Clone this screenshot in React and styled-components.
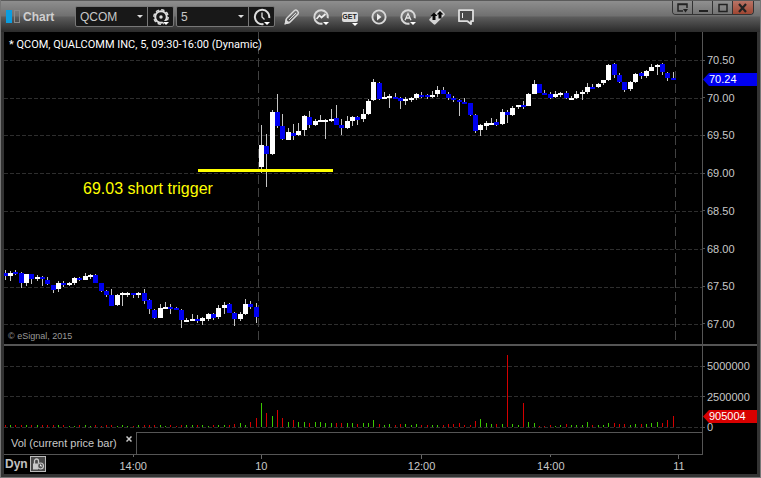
import { useState } from "react";
import styled, { createGlobalStyle } from "styled-components";

// x, open/close direction (1 = up), body top, body bottom, wick top, wick bottom, volume
const candles = [
  [5, 0, 273, 276, 270, 280, 2],
  [10, 1, 273, 276, 271, 281, 2],
  [15, 0, 272, 274, 270, 275, 2],
  [21, 0, 273, 283, 272, 288, 2],
  [26, 1, 274, 283, 274, 286, 2],
  [31, 0, 274, 279, 274, 284, 2],
  [37, 1, 277, 279, 275, 281, 2],
  [42, 0, 277, 279, 276, 286, 2],
  [47, 0, 280, 284, 277, 285, 2],
  [53, 0, 285, 290, 285, 293, 2],
  [58, 1, 283, 289, 281, 292, 2],
  [63, 0, 283, 285, 281, 287, 2],
  [69, 1, 283, 285, 282, 286, 1],
  [74, 1, 278, 283, 277, 285, 1],
  [79, 0, 278, 280, 277, 281, 2],
  [85, 1, 276, 280, 273, 280, 2],
  [90, 1, 275, 277, 274, 279, 1],
  [95, 0, 275, 283, 274, 283, 2],
  [101, 0, 283, 291, 283, 292, 1],
  [106, 0, 291, 295, 290, 297, 2],
  [111, 0, 295, 306, 289, 306, 2],
  [117, 1, 295, 305, 294, 306, 1],
  [122, 1, 293, 295, 292, 306, 2],
  [127, 1, 293, 295, 292, 297, 1],
  [133, 0, 293, 295, 293, 298, 1],
  [138, 1, 293, 295, 292, 298, 2],
  [144, 0, 293, 301, 289, 304, 2],
  [149, 0, 300, 309, 299, 314, 2],
  [154, 0, 310, 318, 309, 319, 2],
  [160, 1, 308, 318, 304, 318, 2],
  [165, 1, 307, 309, 302, 309, 1],
  [170, 0, 307, 309, 304, 314, 2],
  [176, 0, 308, 310, 307, 310, 1],
  [181, 0, 310, 320, 309, 328, 2],
  [186, 1, 320, 322, 318, 322, 2],
  [192, 1, 319, 321, 314, 321, 2],
  [197, 0, 319, 321, 315, 323, 2],
  [202, 1, 318, 321, 317, 325, 2],
  [208, 1, 314, 319, 313, 321, 1],
  [213, 0, 314, 318, 313, 320, 2],
  [218, 1, 308, 317, 305, 319, 2],
  [224, 1, 305, 308, 302, 314, 2],
  [229, 0, 304, 313, 303, 313, 2],
  [234, 0, 313, 319, 312, 326, 3],
  [240, 1, 314, 319, 312, 321, 4],
  [245, 1, 304, 314, 299, 315, 2],
  [250, 0, 304, 307, 301, 309, 5],
  [256, 0, 307, 317, 303, 323, 9],
  [261, 1, 145, 167, 125, 173, 24],
  [266, 0, 146, 154, 134, 187, 14],
  [272, 1, 112, 154, 110, 155, 11],
  [277, 0, 112, 126, 94, 128, 17],
  [282, 0, 126, 139, 114, 140, 9],
  [288, 1, 132, 140, 128, 140, 5],
  [293, 0, 133, 136, 124, 140, 7],
  [298, 1, 131, 135, 123, 136, 5],
  [304, 1, 116, 130, 115, 136, 5],
  [309, 0, 117, 125, 111, 128, 4],
  [315, 1, 121, 125, 119, 126, 5],
  [320, 1, 120, 122, 115, 122, 5],
  [325, 1, 120, 122, 119, 139, 4],
  [331, 1, 119, 121, 109, 122, 4],
  [336, 0, 118, 125, 105, 125, 4],
  [341, 0, 125, 128, 119, 135, 4],
  [347, 1, 121, 128, 116, 129, 4],
  [352, 1, 117, 121, 116, 126, 4],
  [357, 0, 117, 120, 116, 125, 3],
  [363, 1, 114, 119, 109, 122, 4],
  [368, 1, 101, 114, 99, 115, 4],
  [373, 1, 82, 100, 79, 101, 7],
  [379, 0, 83, 99, 82, 100, 3],
  [384, 1, 97, 99, 92, 99, 2],
  [389, 1, 96, 98, 94, 108, 3],
  [395, 0, 97, 99, 93, 99, 2],
  [400, 0, 98, 101, 97, 109, 3],
  [405, 1, 99, 101, 97, 105, 3],
  [411, 1, 98, 100, 97, 102, 2],
  [416, 1, 94, 98, 93, 100, 3],
  [421, 0, 95, 97, 92, 98, 2],
  [427, 0, 95, 97, 94, 99, 2],
  [432, 1, 95, 97, 91, 98, 2],
  [437, 1, 90, 94, 86, 97, 2],
  [443, 0, 90, 94, 87, 94, 2],
  [448, 0, 94, 98, 92, 100, 3],
  [453, 0, 98, 100, 96, 102, 3],
  [459, 0, 100, 102, 99, 116, 4],
  [464, 0, 102, 104, 98, 104, 2],
  [470, 0, 103, 115, 103, 116, 2],
  [475, 0, 115, 131, 114, 133, 6],
  [480, 1, 125, 130, 124, 136, 8],
  [486, 1, 123, 126, 121, 130, 4],
  [491, 1, 123, 125, 118, 125, 3],
  [496, 0, 122, 125, 119, 126, 3],
  [502, 1, 112, 124, 109, 125, 3],
  [507, 0, 112, 115, 110, 123, 72],
  [512, 1, 108, 115, 106, 116, 3],
  [518, 1, 105, 107, 105, 109, 2],
  [523, 0, 105, 107, 101, 109, 24],
  [528, 1, 94, 106, 93, 106, 5],
  [534, 1, 84, 94, 80, 94, 4],
  [539, 0, 84, 93, 84, 93, 1],
  [544, 0, 93, 95, 90, 95, 1],
  [550, 0, 94, 98, 92, 99, 2],
  [555, 1, 94, 97, 91, 98, 1],
  [560, 1, 93, 95, 92, 97, 2],
  [566, 0, 93, 98, 91, 99, 3],
  [571, 1, 98, 100, 96, 100, 2],
  [576, 1, 94, 98, 91, 99, 2],
  [582, 1, 92, 94, 90, 100, 2],
  [587, 1, 87, 92, 83, 94, 5],
  [592, 0, 87, 89, 84, 89, 2],
  [598, 1, 84, 87, 83, 88, 2],
  [603, 1, 80, 83, 80, 85, 2],
  [608, 1, 65, 80, 64, 81, 4],
  [614, 0, 64, 75, 63, 78, 4],
  [619, 0, 75, 82, 73, 83, 3],
  [624, 0, 82, 90, 82, 92, 3],
  [630, 1, 82, 89, 81, 91, 2],
  [635, 1, 74, 82, 73, 83, 3],
  [641, 0, 73, 76, 72, 79, 3],
  [646, 1, 71, 76, 70, 78, 3],
  [651, 1, 67, 71, 64, 71, 4],
  [657, 1, 65, 67, 64, 75, 5],
  [662, 0, 64, 72, 63, 75, 4],
  [667, 0, 73, 78, 72, 81, 7],
  [673, 0, 78, 80, 72, 80, 11],
];

const prices = ["70.50", "70.00", "69.50", "69.00", "68.50", "68.00", "67.50", "67.00"];
const priceLines = [60, 98, 135, 173, 211, 249, 287, 324];
const volumes = ["5000000", "2500000", "0"];
const volumeLines = [366, 396, 427];
const sessions = [258, 675];

const times = [
  { x: 133, label: "14:00", tick: 2 },
  { x: 261, label: "10", tick: 4 },
  { x: 421, label: "12:00", tick: 4 },
  { x: 550, label: "14:00", tick: 2 },
  { x: 678, label: "11", tick: 4 },
];

const PriceChart = () => (
  <PlotSvg
    $height={312}
    viewBox="4 32 698 312"
    preserveAspectRatio="none"
    role="img"
    aria-label="QCOM price"
  >
    <defs>
      <pattern id="dashH" width="6" height="400" patternUnits="userSpaceOnUse" x="4">
        <rect width="4" height="500" fill="#2e2e2e" />
      </pattern>
      <pattern id="dashV" width="800" height="13" patternUnits="userSpaceOnUse" y="32">
        <rect width="800" height="9" fill="#424242" />
      </pattern>
    </defs>
    {priceLines.map((y) => (
      <rect key={y} x="4" y={y} width="698" height="1" fill="url(#dashH)" />
    ))}
    {sessions.map((x) => (
      <rect key={x} x={x} y="32" width="1" height="308" fill="url(#dashV)" />
    ))}
    {candles.map(([x, up, top, bottom, high, low]) => (
      <g key={x}>
        <rect x={x} y={high} width="1" height={low - high} fill="#c4c4c4" />
        <rect
          x={x - 2}
          y={top}
          width="5"
          height={bottom - top}
          fill={up ? "#ffffff" : "#0000f0"}
        />
      </g>
    ))}
    <rect x="198" y="169" width="135" height="3" fill="#ffff00" />
  </PlotSvg>
);

const VolumeChart = () => (
  <PlotSvg
    $height={86}
    viewBox="4 346 698 86"
    preserveAspectRatio="none"
    role="img"
    aria-label="Volume"
  >
    {volumeLines.map((y) => (
      <line
        key={y}
        x1="4"
        x2="702"
        y1={y + 0.5}
        y2={y + 0.5}
        stroke="#2e2e2e"
        strokeDasharray="4 2"
      />
    ))}
    {candles.map(([x, up, , , , , volume]) => (
      <rect
        key={x}
        x={x}
        y={427 - volume}
        width="1"
        height={volume}
        fill={up ? "#3cc800" : "#d40000"}
      />
    ))}
  </PlotSvg>
);

const Caret = () => <path d="M12 15h6l-3 3z" fill="#fff" />;

const OpenRing = () => (
  <path
    d="M11.5 16.6A6.8 6.8 0 1 1 16.8 11.2"
    fill="none"
    stroke="#d8d8d8"
    strokeWidth="2"
  />
);

const tools = [
  {
    name: "Draw",
    icon: (
      <g fill="none" stroke="#dadada" strokeWidth="1.5">
        <path d="M3.5 16.5l1-5 8-8q1.500-1 3 .5t.5 3l-8 8z" />
        <path d="M7 13l7-7" strokeWidth="1" />
        <path d="M3.5 16.5l.6-3 2.400 2.400z" fill="#dadada" />
      </g>
    ),
  },
  {
    name: "Studies",
    icon: (
      <>
        <OpenRing />
        <path d="M5.5 12l3-3.5 2 2L14.5 7" fill="none" stroke="#eee" strokeWidth="1.7" />
        <Caret />
      </>
    ),
  },
  { name: "Get", icon: null },
  {
    name: "Play",
    icon: (
      <>
        <circle cx="10" cy="10" r="6.600" fill="none" stroke="#d8d8d8" strokeWidth="1.900" />
        <path d="M8 6.500L12.500 10 8 13.500z" fill="#eee" />
      </>
    ),
  },
  {
    name: "Alerts",
    icon: (
      <>
        <OpenRing />
        <path d="M7 13.200L10 6.500l3 6.700M8 11h4" fill="none" stroke="#e4e4e4" strokeWidth="1.300" />
        <Caret />
      </>
    ),
  },
  {
    name: "Trade",
    icon: (
      <>
        <path
          d="M2.500 12L12 2.500q1-.5 1.800.3l3.700 3.700q.8.800 0 1.800L8.500 17.300q-1 .8-1.800 0l-4.200-3.800q-.6-.8 0-1.500z"
          fill="#d4d4d4"
        />
        <path d="M7 5.500l3.500 3.500H8.500v4h-3V9h-2z" fill="#080808" />
        <path d="M13 4l3.500 3.500h-2v4h-3v-4h-2z" fill="#080808" />
      </>
    ),
  },
  {
    name: "Notes",
    icon: (
      <>
        <path
          d="M3 3.200h14v11h-2v2.800l-3.500-2.800H3z"
          fill="#4a4a4a"
          stroke="#dedede"
          strokeWidth="1.800"
          strokeLinejoin="round"
        />
        <path d="M6.500 6v5" stroke="#eee" strokeWidth="1" />
      </>
    ),
  },
];

const App = () => {
  const [symbol, setSymbol] = useState("QCOM");
  const [interval, setInterval] = useState("5");

  return (
    <>
      <GlobalStyle />
      <Window>
        <Header>
          <Logo viewBox="0 0 16 14" aria-hidden="true">
            <rect x="1" y="0" width="6" height="13" fill="#0a9de0" />
            <rect x="9.500" y="0.500" width="5" height="12" fill="none" stroke="#8a8a8a" />
          </Logo>
          <WindowTitle>Chart</WindowTitle>
          <Group>
            <SelectBox>
              <Select
                aria-label="Symbol"
                value={symbol}
                onChange={(e) => setSymbol(e.target.value)}
              >
                <option>QCOM</option>
              </Select>
            </SelectBox>
            <GroupButton aria-label="Symbol settings">
              <Icon viewBox="0 0 20 20">
                <circle cx="10" cy="10" r="5.800" fill="none" stroke="#dedede" strokeWidth="2" />
                <circle
                  cx="10"
                  cy="10"
                  r="7.200"
                  fill="none"
                  stroke="#dedede"
                  strokeWidth="1.400"
                  strokeDasharray="3.400 2.250"
                />
                <circle cx="10" cy="10" r="1.700" fill="#dedede" />
                <path d="M11 14h8l-4 5z" fill="#161616" />
                <Caret />
              </Icon>
            </GroupButton>
          </Group>
          <Group>
            <SelectBox>
              <Select
                aria-label="Interval"
                value={interval}
                onChange={(e) => setInterval(e.target.value)}
              >
                <option>5</option>
              </Select>
            </SelectBox>
            <GroupButton aria-label="Time template">
              <Icon viewBox="0 0 20 20">
                <path
                  d="M11.500 17A7.200 7.200 0 1 1 17.200 11"
                  fill="none"
                  stroke="#dedede"
                  strokeWidth="2"
                />
                <path d="M10 5.500V10l2.500 2.500" fill="none" stroke="#dedede" strokeWidth="1.300" />
                <Caret />
              </Icon>
            </GroupButton>
          </Group>
          <Tools>
            {tools.map((tool) => (
              <ToolButton key={tool.name} aria-label={tool.name}>
                {tool.icon ? (
                  <Icon viewBox="0 0 20 20">{tool.icon}</Icon>
                ) : (
                  <GetBadge>GET</GetBadge>
                )}
              </ToolButton>
            ))}
          </Tools>
          <WindowButtons>
            <WindowButton aria-label="Dock">
              <svg width="12" height="10" viewBox="0 0 12 10">
                <path d="M6 8H1V1h9v4M1 1.500h9" fill="none" stroke="#222" strokeWidth="1.500" />
                <path d="M6 6h5L8.500 9.500z" fill="#222" />
              </svg>
            </WindowButton>
            <WindowButton aria-label="Minimize">
              <svg width="12" height="10" viewBox="0 0 12 10">
                <path d="M2 7h9v2H2z" fill="#222" />
              </svg>
            </WindowButton>
            <WindowButton aria-label="Maximize">
              <svg width="12" height="10" viewBox="0 0 12 10">
                <path d="M2 1.500h8v7H2z" fill="none" stroke="#222" strokeWidth="1.500" />
              </svg>
            </WindowButton>
            <WindowButton $close aria-label="Close">
              <svg width="12" height="10" viewBox="0 0 12 10">
                <path d="M2 1l7 8M9 1L2 9" stroke="#222" strokeWidth="2.200" />
              </svg>
            </WindowButton>
          </WindowButtons>
        </Header>

        <Body>
          <Pane>
            <Plot>
              <PriceChart />
              <SymbolTitle>* QCOM, QUALCOMM INC, 5, 09:30-16:00 (Dynamic)</SymbolTitle>
              <Note>69.03 short trigger</Note>
              <Copyright>© eSignal, 2015</Copyright>
            </Plot>
            <PriceAxis>
              {prices.map((price) => (
                <AxisLabel key={price}>{price}</AxisLabel>
              ))}
              <Tag $top={41} $color="#0000f0">
                70.24
              </Tag>
            </PriceAxis>
          </Pane>
          <Divider />
          <Pane>
            <Plot>
              <VolumeChart />
            </Plot>
            <VolumeAxis>
              {volumes.map((volume) => (
                <AxisLabel key={volume}>{volume}</AxisLabel>
              ))}
              <Tag $top={64} $color="#d80000">
                905004
              </Tag>
            </VolumeAxis>
          </Pane>
          <Pane>
            <Tabs>
              <Tab>
                Vol (current price bar)
                <TabClose aria-label="Close tab">
                  <svg width="6" height="6" viewBox="0 0 6 6">
                    <path d="M0.500 0.500l5 5M5.500 0.500l-5 5" stroke="#c8c8c8" strokeWidth="1.500" />
                  </svg>
                </TabClose>
              </Tab>
              <TabRest />
            </Tabs>
            <AxisEdge />
          </Pane>
          <TimeRow>
            <TimeTicks>
              {times.map(({ x, label, tick }) => {
                const left = `${((x - 4) / 698) * 100}%`;
                return (
                  <g key={x}>
                    <line x1={left} x2={left} y1="0" y2={tick} stroke="#666" />
                    <text x={left} y="15" textAnchor="middle">
                      {label}
                    </text>
                  </g>
                );
              })}
            </TimeTicks>
            <Dyn>
              Dyn
              <LockButton aria-label="Lock time">
                <svg width="14" height="14" viewBox="0 0 14 14">
                  <path
                    d="M3.500 7V4a2 2 0 0 1 4 0v2"
                    fill="none"
                    stroke="#c8c8c8"
                    strokeWidth="1.300"
                  />
                  <path d="M2 6.500h5v6H2z" fill="#c8c8c8" />
                  <circle cx="9.500" cy="9" r="3" fill="#555" stroke="#c8c8c8" strokeWidth="1.200" />
                  <path d="M9.500 7.500V9h1.500" fill="none" stroke="#eee" />
                </svg>
              </LockButton>
            </Dyn>
          </TimeRow>
        </Body>
      </Window>
    </>
  );
};

const GlobalStyle = createGlobalStyle`
  body {
    margin: 0;
    background: #333;
    font-family: "Liberation Sans", Arial, sans-serif;
  }
  * {
    box-sizing: border-box;
  }
  button, select {
    font-family: inherit;
  }
`;

const Window = styled.div`
  min-height: 100vh;
  display: flex;
  flex-direction: column;
  background: #333;
  border: 1px solid #777;
  border-top: none;
`;

const Header = styled.header`
  display: flex;
  align-items: center;
  height: 32px;
  padding: 0 6px 0 4px;
  border-top: 1px solid #5a5a5a;
  background: linear-gradient(#8e8e8e, #707070 48%, #5c5c5c 52%, #303030 94%, #2c2c2c);
`;

const Logo = styled.svg`
  width: 16px;
  height: 14px;
`;

const WindowTitle = styled.h1`
  width: 52px;
  margin: 0 0 0 2px;
  font-size: 12px;
  line-height: 16px;
  color: #cfcfcf;
`;

const Group = styled.div`
  display: flex;
  width: 99px;
  height: 21px;
  margin-right: 2px;
  border: 1px solid #777;
  border-radius: 2px;
  background: #181818;
`;

const SelectBox = styled.div`
  position: relative;
  flex: 1;
  display: flex;

  &::after {
    content: "";
    position: absolute;
    top: 8px;
    right: 4px;
    border: 3px solid transparent;
    border-top-color: #ddd;
    border-bottom: none;
    pointer-events: none;
  }
`;

const Select = styled.select`
  appearance: none;
  width: 100%;
  padding: 0 12px 0 4px;
  border: none;
  outline: none;
  background: transparent;
  color: #c8c8c8;
  font-size: 12px;
`;

const GroupButton = styled.button`
  display: flex;
  align-items: center;
  justify-content: center;
  width: 26px;
  padding: 0;
  border: none;
  border-left: 1px solid #777;
  background: transparent;
`;

const Icon = styled.svg`
  display: block;
  width: 20px;
  height: 20px;
`;

const Tools = styled.div`
  display: flex;
`;

const ToolButton = styled.button`
  display: flex;
  align-items: center;
  justify-content: center;
  width: 29px;
  height: 22px;
  padding: 0;
  border: none;
  background: transparent;
`;

const GetBadge = styled.span`
  position: relative;
  width: 16px;
  border-radius: 2px;
  background: #dcdcdc;
  color: #222;
  font-size: 7px;
  font-weight: bold;
  line-height: 10px;
  text-align: center;

  &::after {
    content: "";
    position: absolute;
    right: 0;
    bottom: -4px;
    border: 3px solid transparent;
    border-top-color: #fff;
    border-bottom: none;
  }
`;

const WindowButtons = styled.div`
  display: flex;
  align-self: flex-start;
  margin-left: auto;
  border: 1px solid #333;
  border-top: none;
  border-radius: 0 0 4px 4px;
  overflow: hidden;
`;

const WindowButton = styled.button`
  display: flex;
  align-items: center;
  justify-content: center;
  width: 20px;
  height: 13px;
  padding: 0;
  border: none;
  border-right: ${(props) => (props.$close ? "none" : "1px solid #333")};
  background: ${(props) =>
    props.$close ? "linear-gradient(#b87466, #a04632)" : "linear-gradient(#909090, #747474)"};
`;

const Body = styled.main`
  margin: 0 3px 3px;
  background: #000;
`;

const Pane = styled.section`
  display: grid;
  grid-template-columns: 1fr 55px;
`;

const Plot = styled.div`
  position: relative;
  min-width: 0;
`;

const PlotSvg = styled.svg`
  display: block;
  width: 100%;
  height: ${(props) => props.$height}px;
  shape-rendering: crispEdges;
`;

const SymbolTitle = styled.h2`
  position: absolute;
  top: 6px;
  left: 5px;
  margin: 0;
  font-family: Roboto, "Liberation Sans", sans-serif;
  font-size: 11px;
  font-weight: normal;
  line-height: 14px;
  color: #fff;
`;

const Note = styled.p`
  position: absolute;
  top: 148px;
  left: 79px;
  margin: 0;
  font-size: 16px;
  line-height: 18px;
  color: #ffff00;
`;

const Copyright = styled.small`
  position: absolute;
  bottom: 2px;
  left: 4px;
  font-size: 9px;
  line-height: 12px;
  color: #999;
`;

const Axis = styled.div`
  position: relative;
  display: flex;
  flex-direction: column;
  justify-content: space-between;
  border-left: 1px solid #555;
`;

const PriceAxis = styled(Axis)`
  padding: 23px 0 15px;
`;

const VolumeAxis = styled(Axis)`
  padding: 15px 0 0;
`;

const AxisLabel = styled.span`
  display: flex;
  align-items: center;
  height: 10px;
  font-size: 11px;
  line-height: 10px;
  color: #c8c8c8;

  &::before {
    content: "";
    width: 2px;
    height: 1px;
    margin-right: 2px;
    background: #555;
  }
`;

const Tag = styled.strong`
  position: absolute;
  top: ${(props) => props.$top}px;
  left: 0;
  right: 0;
  padding-left: 6px;
  background: ${(props) => props.$color};
  clip-path: polygon(0 50%, 6px 0, 100% 0, 100% 100%, 6px 100%);
  font-size: 11px;
  font-weight: normal;
  line-height: 13px;
  color: #fff;
`;

const Divider = styled.div`
  height: 2px;
  background: #555;
`;

const Tabs = styled.div`
  display: flex;
  height: 22px;
`;

const Tab = styled.div`
  display: flex;
  align-items: center;
  width: 133px;
  padding-left: 7px;
  border-right: 1px solid #555;
  font-size: 11px;
  color: #c8c8c8;
`;

const TabClose = styled.button`
  align-self: flex-start;
  display: flex;
  margin: 4px 4px 0 auto;
  padding: 0;
  border: none;
  background: transparent;
`;

const TabRest = styled.div`
  flex: 1;
  border-top: 1px solid #555;
`;

const AxisEdge = styled.div`
  border-left: 1px solid #555;
`;

const TimeRow = styled.footer`
  position: relative;
  height: 20px;
  padding-right: 54px;
`;

const TimeTicks = styled.svg`
  display: block;
  width: 100%;
  height: 20px;
  overflow: visible;
  border-top: 1px solid #555;
  font-size: 11px;
  fill: #c8c8c8;
  shape-rendering: crispEdges;
`;

const Dyn = styled.div`
  position: absolute;
  top: 2px;
  left: 1px;
  display: flex;
  align-items: center;
  gap: 2px;
  font-size: 12px;
  font-weight: bold;
  line-height: 16px;
  color: #c0c0c0;
`;

const LockButton = styled.button`
  display: flex;
  padding: 0;
  border: 1px solid #bbb;
  background: #484848;
`;

export default App;
